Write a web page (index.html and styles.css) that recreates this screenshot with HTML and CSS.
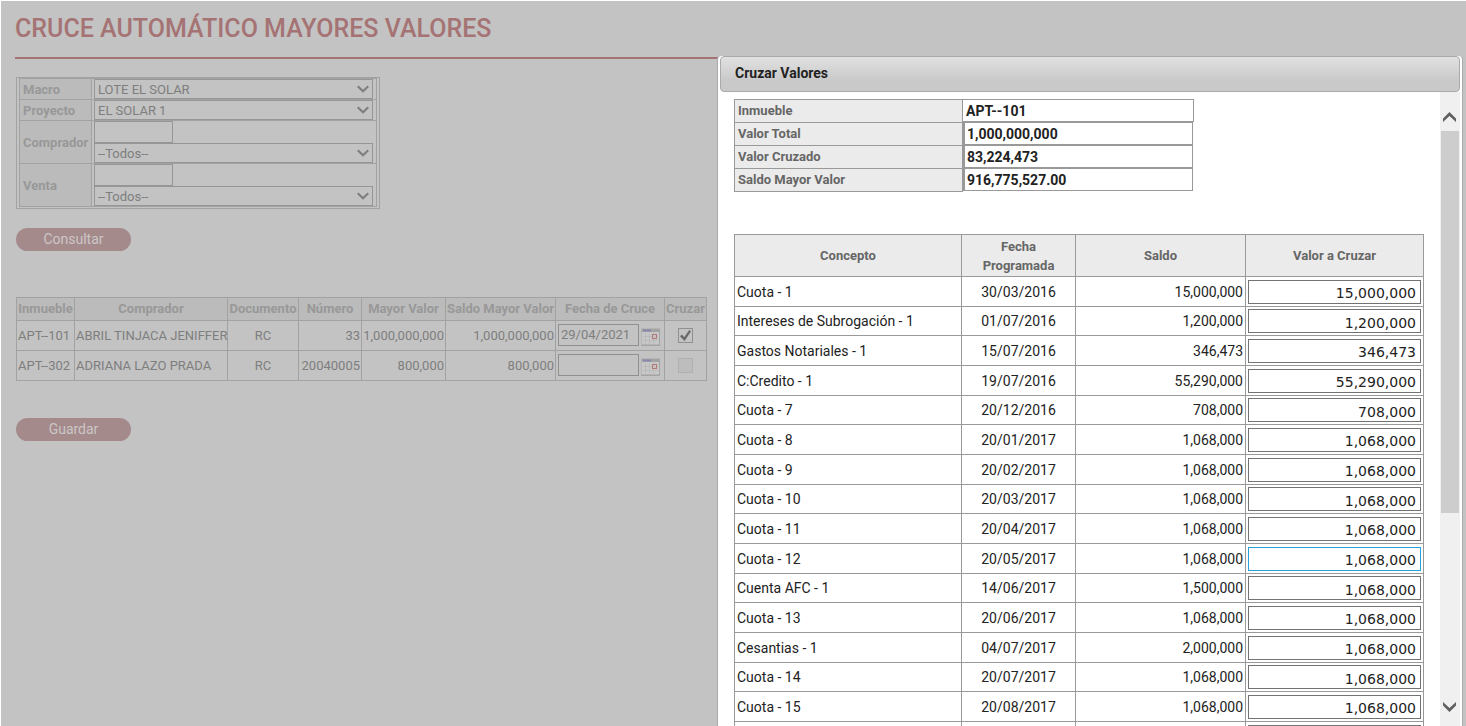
FILE: index.html
```html
<!DOCTYPE html>
<html lang="es">
<head>
<meta charset="utf-8">
<title>Cruce Automático Mayores Valores</title>
<link rel="stylesheet" href="styles.css">
</head>
<body>
<svg class="sprite" width="0" height="0" aria-hidden="true">
  <symbol id="chevron" viewBox="0 0 12 8"><path d="M0.7 1.2 6 6.3 11.3 1.2" fill="none" stroke="currentColor" stroke-width="2.2"/></symbol>
  <symbol id="calendar" viewBox="0 0 19 18">
    <rect x="0.5" y="0.5" width="18" height="16" fill="#c8c8c8" stroke="#b5b5b5"/>
    <path d="M0 17.500H19M18.500 1V18" stroke="#a3a3a3"/>
    <path d="M4.500 5V16M8.500 5V16M12.500 5V16M2 8.500H17M2 12.500H17" stroke="#bababa"/>
    <path d="M1 2.500H18" stroke="#a3a3a3" stroke-width="3"/>
    <path d="M2 2.500H10" stroke="#8989af" stroke-width="2"/>
    <rect x="11.500" y="6.500" width="4" height="4" fill="#c8c0c0" stroke="#b07878"/>
  </symbol>
</svg>
<main class="page">
  <h1 class="page-title">CRUCE AUTOMÁTICO MAYORES VALORES</h1>
  <div class="filters">
    <table class="filter-table">
      <tr><th><label for="macro">Macro</label></th><td><div class="picker"><select id="macro"><option>LOTE EL SOLAR</option></select><svg><use href="#chevron"/></svg></div></td></tr>
      <tr><th><label for="proyecto">Proyecto</label></th><td><div class="picker"><select id="proyecto"><option>EL SOLAR 1</option></select><svg><use href="#chevron"/></svg></div></td></tr>
      <tr><th><label for="comprador">Comprador</label></th><td><input class="code" id="comprador" type="text"><div class="picker"><select aria-label="Comprador"><option>--Todos--</option></select><svg><use href="#chevron"/></svg></div></td></tr>
      <tr><th><label for="venta">Venta</label></th><td><input class="code" id="venta" type="text"><div class="picker"><select aria-label="Venta"><option>--Todos--</option></select><svg><use href="#chevron"/></svg></div></td></tr>
    </table>
  </div>
  <button class="pill" type="button">Consultar</button>
  <table class="results">
    <colgroup><col class="w-prop"><col class="w-buyer"><col class="w-doc"><col class="w-num"><col class="w-value"><col class="w-balance"><col class="w-date"><col class="w-check"></colgroup>
    <thead><tr><th>Inmueble</th><th>Comprador</th><th>Documento</th><th>Número</th><th>Mayor Valor</th><th>Saldo Mayor Valor</th><th>Fecha de Cruce</th><th>Cruzar</th></tr></thead>
    <tbody>
      <tr><td>APT--101</td><td>ABRIL TINJACA JENIFFER</td><td class="center">RC</td><td class="num">33</td><td class="num">1,000,000,000</td><td class="num">1,000,000,000</td><td><div class="date"><input type="text" aria-label="Fecha de Cruce APT-101" value="29/04/2021"><svg><use href="#calendar"/></svg></div></td><td class="center"><input class="tick" type="checkbox" aria-label="Cruzar APT-101" checked></td></tr>
      <tr><td>APT--302</td><td>ADRIANA LAZO PRADA</td><td class="center">RC</td><td class="num">20040005</td><td class="num">800,000</td><td class="num">800,000</td><td><div class="date"><input type="text" aria-label="Fecha de Cruce APT-302"><svg><use href="#calendar"/></svg></div></td><td class="center"><input class="tick" type="checkbox" aria-label="Cruzar APT-302" disabled></td></tr>
    </tbody>
  </table>
  <button class="pill" type="button">Guardar</button>
</main>
<section class="dialog" role="dialog" aria-labelledby="dialog-title">
  <h2 class="dialog-title" id="dialog-title">Cruzar Valores</h2>
  <div class="dialog-body">
    <div class="dialog-content">
      <dl class="summary">
        <dt>Inmueble</dt><dd class="plain">APT--101</dd>
        <dt><label for="total">Valor Total</label></dt><dd><input id="total" type="text" value="1,000,000,000" readonly></dd>
        <dt><label for="cruzado">Valor Cruzado</label></dt><dd><input id="cruzado" type="text" value="83,224,473" readonly></dd>
        <dt><label for="saldo">Saldo Mayor Valor</label></dt><dd><input id="saldo" type="text" value="916,775,527.00" readonly></dd>
      </dl>
      <table class="quotas">
        <colgroup><col class="w-concept"><col class="w-due"><col class="w-left"><col class="w-cross"></colgroup>
        <thead><tr><th>Concepto</th><th>Fecha<br>Programada</th><th>Saldo</th><th>Valor a Cruzar</th></tr></thead>
        <tbody>
          <tr><td>Cuota - 1</td><td>30/03/2016</td><td>15,000,000</td><td><input type="text" aria-label="Valor a Cruzar" value="15,000,000"></td></tr>
          <tr><td>Intereses de Subrogación - 1</td><td>01/07/2016</td><td>1,200,000</td><td><input type="text" aria-label="Valor a Cruzar" value="1,200,000"></td></tr>
          <tr><td>Gastos Notariales - 1</td><td>15/07/2016</td><td>346,473</td><td><input type="text" aria-label="Valor a Cruzar" value="346,473"></td></tr>
          <tr><td>C:Credito - 1</td><td>19/07/2016</td><td>55,290,000</td><td><input type="text" aria-label="Valor a Cruzar" value="55,290,000"></td></tr>
          <tr><td>Cuota - 7</td><td>20/12/2016</td><td>708,000</td><td><input type="text" aria-label="Valor a Cruzar" value="708,000"></td></tr>
          <tr><td>Cuota - 8</td><td>20/01/2017</td><td>1,068,000</td><td><input type="text" aria-label="Valor a Cruzar" value="1,068,000"></td></tr>
          <tr><td>Cuota - 9</td><td>20/02/2017</td><td>1,068,000</td><td><input type="text" aria-label="Valor a Cruzar" value="1,068,000"></td></tr>
          <tr><td>Cuota - 10</td><td>20/03/2017</td><td>1,068,000</td><td><input type="text" aria-label="Valor a Cruzar" value="1,068,000"></td></tr>
          <tr><td>Cuota - 11</td><td>20/04/2017</td><td>1,068,000</td><td><input type="text" aria-label="Valor a Cruzar" value="1,068,000"></td></tr>
          <tr><td>Cuota - 12</td><td>20/05/2017</td><td>1,068,000</td><td><input class="active" type="text" aria-label="Valor a Cruzar" value="1,068,000"></td></tr>
          <tr><td>Cuenta AFC - 1</td><td>14/06/2017</td><td>1,500,000</td><td><input type="text" aria-label="Valor a Cruzar" value="1,068,000"></td></tr>
          <tr><td>Cuota - 13</td><td>20/06/2017</td><td>1,068,000</td><td><input type="text" aria-label="Valor a Cruzar" value="1,068,000"></td></tr>
          <tr><td>Cesantias - 1</td><td>04/07/2017</td><td>2,000,000</td><td><input type="text" aria-label="Valor a Cruzar" value="1,068,000"></td></tr>
          <tr><td>Cuota - 14</td><td>20/07/2017</td><td>1,068,000</td><td><input type="text" aria-label="Valor a Cruzar" value="1,068,000"></td></tr>
          <tr><td>Cuota - 15</td><td>20/08/2017</td><td>1,068,000</td><td><input type="text" aria-label="Valor a Cruzar" value="1,068,000"></td></tr>
          <tr><td></td><td></td><td></td><td><input type="text" aria-label="Valor a Cruzar"></td></tr>
        </tbody>
      </table>
    </div>
    <div class="scrollbar" aria-hidden="true">
      <div class="scroll-arrow"><svg class="up" viewBox="0 0 13 10"><path d="M0 6.500 6.500 0 13 6.500V10L6.500 4 0 10Z" fill="#606060"/></svg></div>
      <div class="scroll-track"><div class="scroll-thumb"></div></div>
      <div class="scroll-arrow down"><svg viewBox="0 0 13 10"><path d="M0 3.500 6.500 10 13 3.500V0L6.500 6 0 0Z" fill="#606060"/></svg></div>
    </div>
  </div>
</section>
</body>
</html>
```
FILE: styles.css
```css
* { box-sizing: border-box; }
html, body { height: 100%; }
body {
  margin: 0;
  padding: 1px 0 0 1px;
  overflow: hidden;
  background: #fff;
  font-family: Roboto, "Liberation Sans", sans-serif;
  font-size: 13px;
  color: #222;
}
.sprite { position: absolute; }
input, select, button { font: inherit; color: inherit; margin: 0; border-radius: 0; }
table { border-collapse: collapse; table-layout: fixed; }
th, td { padding: 0 2px; }

.page {
  height: 100%;
  padding: 0 15px;
  background: #c3c3c3;
  color: #7e7e7e;
}
.page-title {
  margin: 0 -1px 18px;
  height: 58px;
  padding-top: 11px;
  border-bottom: 2px solid #a57373;
  color: #a57373;
  font-size: 25px;
  font-weight: 500;
  line-height: 34px;
}

.filters {
  width: 364px;
  padding: 0 2px 1px;
  border: 1px solid #a2a2a2;
}
.filter-table { width: 100%; }
.filter-table th {
  width: 72px;
  padding: 0 0 0 3px;
  border: 1px solid #a2a2a2;
  background: #bbb;
  color: #989898;
  text-align: left;
}
.filter-table td { border: 1px solid #a2a2a2; padding: 0 3px 0 2px; }
.picker { position: relative; width: 279px; height: 20px; }
.picker select {
  display: block;
  width: 100%;
  height: 20px;
  padding: 0 3px;
  border: 1px solid #969696;
  appearance: none;
  background: transparent;
}
.picker svg { position: absolute; right: 4px; top: 6px; width: 12px; height: 8px; pointer-events: none; }
.code {
  display: block;
  width: 79px;
  height: 22px;
  border: 1px solid #969696;
  background: transparent;
}

.pill {
  display: block;
  width: 115px;
  height: 23px;
  margin: 19px 0 46px;
  padding: 0 0 2px;
  border: 0;
  border-radius: 12px;
  background: #a58a8c;
  color: #cbc6c6;
  font-size: 14px;
}

.results { width: 691px; margin-bottom: 37px; white-space: nowrap; }
.results th, .results td { border: 1px solid #a2a2a2; }
.results th { height: 23px; padding: 0 0 2px; background: #bbb; color: #989898; }
.results td { height: 30px; padding: 0 1px; }
.w-prop { width: 58px; }
.w-buyer { width: 153px; }
.w-doc { width: 71px; }
.w-num { width: 63px; }
.w-value { width: 84px; }
.w-balance { width: 110px; }
.w-date { width: 109px; }
.center { text-align: center; }
.num { text-align: right; }
.date { display: flex; align-items: flex-start; gap: 2px; height: 24px; padding-left: 1px; }
.date input {
  width: 81px;
  height: 22px;
  padding: 0 2px;
  border: 1px solid #909090;
  background: transparent;
}
.date svg { width: 19px; height: 18px; margin-top: 4px; }
.tick {
  position: relative;
  display: block;
  width: 15px;
  height: 15px;
  margin: 0 auto;
  appearance: none;
  border: 1px solid #909090;
}
.tick:checked::before {
  content: "";
  position: absolute;
  inset: 1px;
  background: #686868;
  clip-path: polygon(0 56%, 18% 42%, 38% 66%, 84% 0, 100% 12%, 42% 100%);
}
.tick:disabled { border-color: #b0b0b0; background: #bdbdbd; }

.dialog {
  position: absolute;
  top: 56px;
  right: 3px;
  bottom: 0;
  width: 746px;
  max-width: 100%;
  display: flex;
  flex-direction: column;
  padding: 0 2px;
  border: 1px solid #aaa;
  border-width: 0 1px;
  border-radius: 4px 4px 0 0;
  background: #fff;
}
.dialog-title {
  flex: none;
  height: 36px;
  margin: 0;
  padding-left: 14px;
  border: 1px solid #aaa;
  border-radius: 4px;
  background: linear-gradient(#e1e1e1, #c9c9c9 70%, #c9c9c9);
  font-size: 14px;
  font-weight: 700;
  line-height: 33px;
}
.dialog-body { flex: 1; min-height: 0; display: flex; }
.dialog-content { flex: 1; overflow: hidden; padding: 7px 16px 0 14px; }

.summary {
  display: grid;
  grid-template-columns: 229px 231px;
  margin: 0 0 43px;
  font-weight: 700;
}
.summary dt {
  height: 24px;
  margin-bottom: -1px;
  padding-left: 3px;
  border: 1px solid #999;
  background: #ebebeb;
  color: #666;
  line-height: 22px;
}
.summary dd { height: 23px; margin: 0; }
.summary .plain { border: 1px solid #999; border-left: 0; padding-left: 3px; font-size: 14px; line-height: 22px; }
.summary input {
  display: block;
  width: 230px;
  height: 23px;
  padding: 0 2px;
  border: 1px solid #999;
  border-left-width: 2px;
  font-size: 14px;
}

.quotas { width: 100%; font-size: 14px; }
.quotas th, .quotas td { border: 1px solid #999; }
.quotas th { height: 42px; background: #ebebeb; color: #666; font-size: 13px; line-height: 19px; }
.quotas td { height: 30px; }
.quotas tbody tr:nth-child(3n+2) td { height: 29px; }
.w-concept { width: 227px; }
.w-due { width: 114px; }
.w-left { width: 170px; }
.quotas td:nth-child(2) { text-align: center; }
.quotas td:nth-child(3) { text-align: right; }
.quotas input {
  display: block;
  width: 100%;
  height: 24px;
  padding: 3px 4px 0;
  border: 1px solid #737373;
  background: #fff;
  font-family: "DejaVu Sans", sans-serif;
  text-align: right;
}
.quotas .active { border-color: #26a0da; }

.scrollbar { flex: none; display: flex; flex-direction: column; width: 20px; background: #f0f0f0; }
.scroll-arrow { flex: none; height: 39px; padding: 20px 4px 0 3px; }
.scroll-arrow svg { display: block; width: 13px; height: 10px; }
.scroll-arrow.down { height: 25px; padding-top: 1px; }
.scroll-track { flex: 1; padding: 0 1px; }
.scroll-thumb { height: 67%; background: #cdcdcd; }
```
